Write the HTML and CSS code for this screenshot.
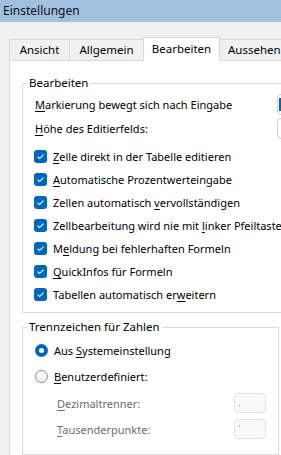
FILE: index.html
```html
<!DOCTYPE html>
<html lang="de">
<head>
    <meta charset="UTF-8">
    <title>Einstellungen</title>
    <link rel="stylesheet" href="styles.css">
</head>
<body>
    <div class="titlebar">Einstellungen</div>

    <div class="tabs">
        <div class="tab tab-first">Ansicht</div>
        <div class="tab tab-second">Allgemein</div>
        <div class="tab tab-active">Bearbeiten</div>
        <div class="tab tab-last">Aussehen</div>
    </div>

    <div class="panel">
        <fieldset class="group group-edit">
            <legend>Bearbeiten</legend>
            <div class="edit-body">
                <div class="field-row">
                    <span class="field-label"><u>M</u>arkierung bewegt sich nach Eingabe</span>
                    <span class="field-box focused"><span class="caret"></span></span>
                </div>
                <div class="field-row second">
                    <span class="field-label"><u>H</u>öhe des Editierfelds:</span>
                    <span class="field-box"></span>
                </div>

                <ul class="checks">
                    <li><span class="checkbox"><svg width="13" height="13" viewBox="0 0 13 13"><path d="M3.6 6.7 L5.6 8.6 L9.5 4.6" /></svg></span><span><u>Z</u>elle direkt in der Tabelle editieren</span></li>
                    <li><span class="checkbox"><svg width="13" height="13" viewBox="0 0 13 13"><path d="M3.6 6.7 L5.6 8.6 L9.5 4.6" /></svg></span><span><u>A</u>utomatische Prozentwerteingabe</span></li>
                    <li><span class="checkbox"><svg width="13" height="13" viewBox="0 0 13 13"><path d="M3.6 6.7 L5.6 8.6 L9.5 4.6" /></svg></span><span>Zellen automatisch <u>v</u>ervollständigen</span></li>
                    <li><span class="checkbox"><svg width="13" height="13" viewBox="0 0 13 13"><path d="M3.6 6.7 L5.6 8.6 L9.5 4.6" /></svg></span><span>Zellbearbeitung wird nie mit <u>l</u>inker Pfeiltaste beendet</span></li>
                    <li><span class="checkbox"><svg width="13" height="13" viewBox="0 0 13 13"><path d="M3.6 6.7 L5.6 8.6 L9.5 4.6" /></svg></span><span>M<u>e</u>ldung bei fehlerhaften Formeln</span></li>
                    <li><span class="checkbox"><svg width="13" height="13" viewBox="0 0 13 13"><path d="M3.6 6.7 L5.6 8.6 L9.5 4.6" /></svg></span><span><u>Q</u>uickInfos für Formeln</span></li>
                    <li><span class="checkbox"><svg width="13" height="13" viewBox="0 0 13 13"><path d="M3.6 6.7 L5.6 8.6 L9.5 4.6" /></svg></span><span>Tabellen automatisch er<u>w</u>eitern</span></li>
                </ul>
            </div>
        </fieldset>

        <fieldset class="group group-sep">
            <legend>Trennzeichen für Zahlen</legend>
            <div class="sep-body">
                <div class="radio-row">
                    <span class="radio checked"></span>
                    <span>Aus <u>S</u>ystemeinstellung</span>
                </div>
                <div class="radio-row second">
                    <span class="radio"></span>
                    <span><u>B</u>enutzerdefiniert:</span>
                </div>
                <div class="sub-row">
                    <span class="sub-label"><u>D</u>ezimaltrenner:</span>
                    <span class="sub-box">.</span>
                </div>
                <div class="sub-row">
                    <span class="sub-label"><u>T</u>ausenderpunkte:</span>
                    <span class="sub-box">'</span>
                </div>
            </div>
        </fieldset>
    </div>
</body>
</html>
```

FILE: styles.css
```css
/* Base */
* {
    box-sizing: border-box;
}

body {
    margin: 0;
    width: 281px;
    height: 455px;
    overflow: hidden;
    background: #f0f0f0;
    color: #000;
    font-family: "Noto Sans", "Open Sans", sans-serif;
    font-size: 11px;
}

u {
    text-underline-offset: 2px;
}

/* Title bar */
.titlebar {
    height: 22px;
    line-height: 22px;
    padding-left: 3px;
    background: #a1bfdf;
    color: #111;
    font-size: 12px;
}

/* Tabs */
.tabs {
    display: flex;
    align-items: flex-end;
    height: 23px;
    margin-top: 15px;
    padding-left: 9px;
    white-space: nowrap;
}

.tab {
    height: 21px;
    line-height: 20px;
    text-align: center;
    background: #f0f0f0;
    border-top: 1px solid #d9d9d9;
    border-right: 1px solid #d9d9d9;
    flex-shrink: 0;
    font-size: 11.5px;
}

.tab-first {
    width: 61px;
    border-left: 1px solid #d9d9d9;
}

.tab-second {
    width: 74px;
}

.tab-active {
    position: relative;
    z-index: 1;
    width: 77px;
    height: 24px;
    line-height: 22px;
    margin-left: -1px;
    margin-bottom: -1px;
    background: #fff;
    border-left: 1px solid #d9d9d9;
}

.tab-last {
    width: 80px;
    padding-left: 8px;
    text-align: left;
}

/* Page panel */
.panel {
    height: 395px;
    margin-left: 9px;
    padding: 14px 0 0 12px;
    background: #fff;
    border-top: 1px solid #d9d9d9;
    border-left: 1px solid #d9d9d9;
}

/* Group boxes */
.group {
    margin: 0;
    padding: 0;
    min-width: 0;
    border: 1px solid #dcdcdc;
}

.group legend {
    margin-left: 4px;
    padding: 0 2px;
    line-height: 16px;
    font-size: 11.5px;
}

.group-edit {
    width: 320px;
}

.group-sep {
    width: 257px;
    margin-top: 6px;
}

.edit-body {
    padding: 3px 0 6px 12px;
}

.field-row {
    display: flex;
    align-items: center;
    height: 21px;
    white-space: nowrap;
}

.field-row.second {
    margin-top: 3px;
}

.field-label {
    width: 242px;
    flex-shrink: 0;
}

.field-box {
    position: relative;
    width: 40px;
    height: 21px;
    background: #fff;
    border: 1px solid #cfcfcf;
    border-radius: 4px;
}

.caret {
    position: absolute;
    left: 1px;
    top: 3px;
    width: 2px;
    height: 13px;
    background: #0067c0;
}

/* Checkboxes */
.checks {
    list-style: none;
    margin: 6px 0 0 -1px;
    padding: 0;
    white-space: nowrap;
}

.checks li {
    display: flex;
    align-items: center;
    height: 23px;
}

.checkbox {
    display: block;
    width: 13px;
    height: 13px;
    margin-right: 6px;
    background: #0067c0;
    border-radius: 3px;
    flex-shrink: 0;
}

.checkbox svg {
    display: block;
}

.checkbox path {
    fill: none;
    stroke: #fff;
    stroke-width: 1.1;
}

/* Radios */
.sep-body {
    padding: 4px 0 15px 12px;
}

.radio-row {
    display: flex;
    align-items: center;
    height: 22px;
}

.radio-row.second {
    margin-top: 4px;
}

.radio {
    display: block;
    width: 13px;
    height: 13px;
    margin-right: 6px;
    border-radius: 50%;
    border: 1px solid #8a8a8a;
    background: #f5f5f5;
    flex-shrink: 0;
}

.radio.checked {
    border: 4px solid #0067c0;
    background: #fff;
}

.sub-row {
    display: flex;
    align-items: center;
    height: 20px;
    margin-top: 6px;
    padding-left: 22px;
    color: #6d6d6d;
}

.sub-label {
    width: 177px;
    flex-shrink: 0;
}

.sub-box {
    width: 32px;
    height: 20px;
    padding-left: 3px;
    line-height: 18px;
    font-size: 9px;
    color: #8a8a8a;
    background: #f9f9f9;
    border: 1px solid #e3e3e3;
    border-radius: 4px;
}
```
